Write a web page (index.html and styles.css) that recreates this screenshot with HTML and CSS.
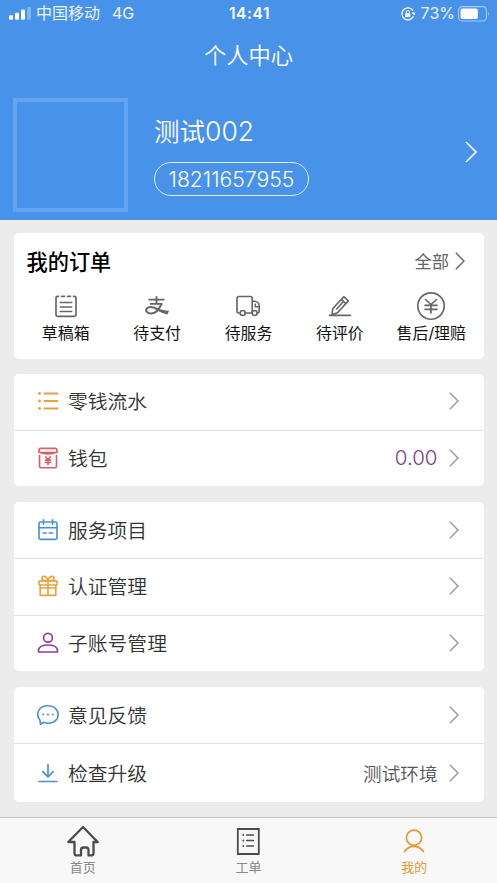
FILE: index.html
```html
<!DOCTYPE html>
<html lang="zh-CN">
<head>
<meta charset="utf-8">
<title>个人中心</title>
<link rel="stylesheet" href="styles.css">
</head>
<body>
<svg class="defs" width="0" height="0" aria-hidden="true">
  <symbol id="chevron" viewBox="0 0 10 18"><path d="M.8 .8 9 9 .8 17.2"/></symbol>
</svg>
<div class="app">
  <header class="header">
    <div class="status">
      <div class="status-left">
        <svg class="signal" width="22" height="13" viewBox="0 0 22 13"><rect x="0" y="8.2" width="4" height="4.600" rx="1"/><rect x="6" y="5.700" width="4" height="7.100" rx="1"/><rect x="12" y="2.500" width="4" height="10.300" rx="1"/><rect x="18" y="0" width="4" height="12.800" rx="1" opacity=".3"/></svg>
        <span class="carrier">中国移动</span>
        <span>4G</span>
      </div>
      <div class="clock">14:41</div>
      <div class="status-right">
        <svg width="14" height="14" viewBox="0 0 14 14"><path d="M12 3.600A6 6 0 1 0 12.400 9.400" fill="none" stroke="#fff" stroke-width="1.300"/><path d="M10.800 5.500h3.200v2.600h-1.500z" fill="#fff"/><rect x="4.300" y="6.200" width="5" height="3.800" rx=".6" fill="#fff"/><path d="M5.300 6.400V5a1.500 1.500 0 0 1 3 0v1.400" fill="none" stroke="#fff"/></svg>
        <span class="percent">73%</span>
        <svg width="32" height="16" viewBox="0 0 32 16"><rect x=".6" y=".6" width="27.800" height="14.400" rx="3.600" fill="none" stroke="#a6caf5" stroke-width="1.100"/><rect x="2.600" y="2.600" width="17.200" height="10.400" rx="1.800" fill="#fff"/><path d="M30 5.400q1.700 2.400 0 4.800z" fill="#a6caf5"/></svg>
      </div>
    </div>
    <h1 class="page-title">个人中心</h1>
    <div class="profile">
      <div class="avatar"></div>
      <div class="identity">
        <div class="name">测试<span class="digits">002</span></div>
        <div class="phone">18211657955</div>
      </div>
      <svg class="profile-arrow" width="12" height="22" viewBox="0 0 12 22"><path d="M1 1 11 11 1 21"/></svg>
    </div>
  </header>

  <main class="content">
    <section class="card orders">
      <div class="orders-head">
        <h2>我的订单</h2>
        <div class="all"><span>全部</span><svg class="chevron"><use href="#chevron"/></svg></div>
      </div>
      <div class="order-grid">
        <div class="order">
          <svg class="icon" width="30" height="30" viewBox="0 0 30 30"><path d="M7.500 5.300H6.700Q5 5.300 5 7v16.600Q5 25.300 6.700 25.300h16.600q1.700 0 1.700-1.700V7Q25 5.300 23.300 5.300h-.8M10.500 5.300h3M16.500 5.300h3M9.300 11.500h11.400M9.300 16h11.400M9.300 20.500h11.400"/></svg>
          <span>草稿箱</span>
        </div>
        <div class="order">
          <svg class="icon" width="30" height="30" viewBox="0 0 30 30"><path stroke-width="1.900" stroke-linecap="butt" d="M6.500 8.600h16M14.500 5.300V13M8 12.900h12.500"/><path stroke-width="2" stroke-linecap="butt" d="M19.500 12.900c-1.800 4.500-5 9.300-10 9.500-4.500.2-6.500-2.700-4.600-4.900 2.400-2.600 7.200-1 10.600.7"/><path d="M14 16.800c4 1.800 8.500 2.700 13 3L25.500 23.400C20 22.500 17 20.500 13.500 18.500z" fill="#666" stroke="none"/></svg>
          <span>待支付</span>
        </div>
        <div class="order">
          <svg class="icon" width="30" height="30" viewBox="0 0 30 30"><path d="M6.500 22H5.700Q4 22 4 20.300V7.200Q4 5.500 5.700 5.500h11.800Q19.200 5.500 19.200 7.200V22M12.200 22h6.500M19.200 10.200h2.100c2.900 0 4.900 2.200 4.900 4.800v5q0 2-2 2M22.300 13.200v2.500h3.700"/><circle cx="9.700" cy="22" r="2.500"/><circle cx="21.600" cy="22" r="2.500"/></svg>
          <span>待服务</span>
        </div>
        <div class="order">
          <svg class="icon" width="30" height="30" viewBox="0 0 30 30"><path d="M4.500 24.300h21M7 23.500l.8-6L18.700 5.700l4.700 4.200L12.500 21.700zM16.200 8.400l4.700 4.200M18 11l-6.300 7"/></svg>
          <span>待评价</span>
        </div>
        <div class="order">
          <svg class="icon" width="30" height="30" viewBox="0 0 30 30"><circle cx="15" cy="15" r="13.200"/><path d="M9.500 8.500 15 13.500l5.500-5M9 14.300h12M9 18.300h12M15 13.500v8.500"/></svg>
          <span>售后/理赔</span>
        </div>
      </div>
    </section>

    <section class="card">
      <div class="row">
        <svg class="icon orange" width="24" height="24" viewBox="0 0 24 24"><path stroke-width="1.800" d="M8.500 4.500h13M8.500 12h13M8.500 19.500h13"/><path stroke-width="2.900" d="M3.500 4.500h.01M3.500 12h.01M3.500 19.500h.01"/></svg>
        <span class="label">零钱流水</span><svg class="chevron"><use href="#chevron"/></svg>
      </div>
      <div class="row">
        <svg class="icon red" width="24" height="24" viewBox="0 0 24 24"><path d="M4.500 2.300h15Q21 2.300 21 4v2.500H3V4Q3 2.300 4.500 2.300zM3 6c5 2.700 13 2.700 18 0M3.500 9.500v10.200Q3.500 21.700 5.500 21.700h13q2 0 2-2V9.500"/><path stroke-width="1.700" d="m9.700 11 2.300 2.700 2.300-2.700M9.500 14.200h5M9.500 16.500h5M12 13.700v4.800"/></svg>
        <span class="label">钱包</span><span class="amount">0.00</span><svg class="chevron"><use href="#chevron"/></svg>
      </div>
    </section>

    <section class="card services">
      <div class="row">
        <svg class="icon blue" width="24" height="24" viewBox="0 0 24 24"><rect x="3" y="4" width="18" height="17.300" rx="1.700"/><path d="M3 9.700h18M7.500 1.800v4.500M16.500 1.800v4.500M7.200 15h3M13.200 15h3.500"/></svg>
        <span class="label">服务项目</span><svg class="chevron"><use href="#chevron"/></svg>
      </div>
      <div class="row">
        <svg class="icon orange" width="24" height="24" viewBox="0 0 24 24"><rect x="3" y="6.800" width="18" height="4.200" rx=".8"/><path d="M4.200 11v10.300h15.600V11M12 7v14M4.200 14h15.600M12 6.500C10.500 1.500 5.500 1 6 4.500c.2 1.500 2 2.200 3.500 2.200M12 6.500C13.500 1.500 18.500 1 18 4.500c-.2 1.500-2 2.200-3.500 2.200"/></svg>
        <span class="label">认证管理</span><svg class="chevron"><use href="#chevron"/></svg>
      </div>
      <div class="row">
        <svg class="icon purple" width="24" height="24" viewBox="0 0 24 24"><circle cx="12" cy="6.700" r="4.400"/><path d="M2.500 21V19c.5-3 4-5 9.500-5s9 2 9.500 5v2z"/></svg>
        <span class="label">子账号管理</span><svg class="chevron"><use href="#chevron"/></svg>
      </div>
    </section>

    <section class="card support">
      <div class="row">
        <svg class="icon blue" width="24" height="24" viewBox="0 0 24 24"><path d="M4 17.200C-.2 12 1.500 2.700 12 2.700c6.300 0 10.200 4 10.200 8.700 0 6.800-8 10.800-14.400 7.900L4.500 21.300z"/><path stroke-width="2.100" d="M7.200 11.500h.01M12 11.500h.01M16.800 11.500h.01"/></svg>
        <span class="label">意见反馈</span><svg class="chevron"><use href="#chevron"/></svg>
      </div>
      <div class="row">
        <svg class="icon blue" width="24" height="24" viewBox="0 0 24 24"><path stroke-width="1.700" d="M3 20.500h18M12 3.500v12M6.800 10.700 12 15.800l5.200-5.100"/></svg>
        <span class="label">检查升级</span><span class="note">测试环境</span><svg class="chevron"><use href="#chevron"/></svg>
      </div>
    </section>
  </main>

  <nav class="tabbar">
    <div class="tab">
      <svg class="tab-icon" width="34" height="34" viewBox="0 0 34 34"><path stroke-width="2.300" d="M2.300 18 17 3l14.700 15h-4.200v11.200q0 2.200-2.200 2.200h-2.800V26q0-2.500-2.500-2.500h-2.500q-2.500 0-2.500 2.500v5.400H10.700q-2.200 0-2.200-2.200V18z"/></svg>
      <span>首页</span>
    </div>
    <div class="tab">
      <svg class="tab-icon" width="34" height="34" viewBox="0 0 34 34"><path stroke-linejoin="miter" stroke-width="1.800" d="M6.800 5h21v25h-21z"/><path stroke-width="1.700" d="M15.800 11h6.500M15.800 16.500h6.500M15.800 22h6.500"/><path stroke-width="1.900" d="M12.300 11h.01M12.300 16.500h.01M12.300 22h.01"/></svg>
      <span>工单</span>
    </div>
    <div class="tab active">
      <svg class="tab-icon" width="34" height="34" viewBox="0 0 34 34"><circle cx="17" cy="13.800" r="7.600" stroke-width="1.700"/><path stroke-width="1.700" d="M7.500 27.500c5-6.800 14-6.800 19 0"/></svg>
      <span>我的</span>
    </div>
  </nav>
</div>
</body>
</html>
```
FILE: styles.css
```css
* { box-sizing: border-box; }
body {
  margin: 0;
  background: #ececec;
  color: #333;
  font-family: Inter, "Noto Sans CJK SC", sans-serif;
}
h1, h2 { margin: 0; }
svg { display: block; flex: none; }
.defs { position: absolute; }
.app { width: 497px; height: 883px; display: flex; flex-direction: column; overflow: hidden; }

.header { height: 219.500px; flex: none; background: #4992ea; color: #fff; }
.status {
  height: 27px;
  padding: 0 7px 0 9px;
  display: grid;
  grid-template-columns: 1fr auto 1fr;
  align-items: center;
  font-size: 16px;
  line-height: 27px;
}
.status-left, .status-right { display: flex; align-items: center; color: #e9f4ff; }
.status-right { justify-content: flex-end; }
.signal { fill: #fff; }
.carrier { margin: 0 12px 0 5px; }
.clock { font-weight: 600; font-size: 15.500px; letter-spacing: .6px; }
.percent { margin: 0 3px 0 6px; font-size: 16px; }
.page-title {
  height: 57px;
  line-height: 57px;
  text-align: center;
  font-size: 22.300px;
  font-weight: 350;
}
.profile { display: flex; align-items: center; padding: 14px 20px 0 13px; }
.avatar { width: 115px; height: 114px; border: 4px solid #63a4f1; }
.identity { margin-left: 26px; display: flex; flex-direction: column; align-items: flex-start; flex: 1; }
.name { font-size: 25.500px; height: 35px; line-height: 35px; font-weight: 350; margin-bottom: 13px; }
.digits { font-size: 26.500px; line-height: 1; }
.phone {
  width: 155px;
  height: 34px;
  border: 1.500px solid #e2f0ff;
  border-radius: 17px;
  line-height: 32px;
  text-align: center;
  font-size: 21.200px;
  font-weight: 300;
}
.profile-arrow { fill: none; stroke: #fff; stroke-width: 1.600; margin-top: -6px; }

.content { flex: 1; padding: 13.500px 13px 0 13.500px; }
.card { background: #fff; border-radius: 5px; margin-bottom: 16px; }
.orders { height: 126px; margin-bottom: 14.500px; }
.support { margin-bottom: 0; }
.orders-head { display: flex; justify-content: space-between; align-items: center; height: 56px; padding: 0 19px 0 13px; }
.orders-head h2 { font-size: 21.200px; font-weight: 500; color: #000; margin-top: -2px; }
.all { display: flex; align-items: center; gap: 6px; font-size: 17.300px; color: #666; }
.all span { margin-top: -2px; }
.all .chevron { stroke: #666; }
.order-grid { display: grid; grid-template-columns: repeat(5, 91.400px); padding-left: 6.500px; }
.order { display: flex; flex-direction: column; align-items: center; font-size: 15.900px; line-height: 24px; color: #111; white-space: nowrap; }
.icon, .tab-icon { fill: none; stroke: #666; stroke-width: 1.650; stroke-linecap: round; stroke-linejoin: round; }
.order .icon { margin: 2px 0 1px; }
.chevron { width: 10px; height: 18px; fill: none; stroke: #999; stroke-width: 1.400; }

.row { height: 56px; display: flex; align-items: center; padding: 0 25.500px 1px 22.500px; }
.row + .row { height: 56.500px; border-top: 1px solid #e2e2e2; }
.support .row + .row { height: 59px; }
.label { flex: 1; margin: -1px 0 0 8px; font-size: 19.800px; font-weight: 350; }
.amount { font-size: 20.500px; font-weight: 300; color: #853a82; margin-right: 11px; }
.note { font-size: 18.600px; font-weight: 350; color: #555; margin: -1px 11px 0 0; }
.icon.orange { stroke: #e9a23b; }
.icon.red { stroke: #d85f68; }
.icon.blue { stroke: #4a90dc; }
.icon.purple { stroke: #8e3ca4; }

.tabbar {
  height: 66px;
  flex: none;
  display: grid;
  grid-template-columns: repeat(3, 1fr);
  background: #f8f8f8;
  border-top: 1px solid #c4c4c4;
}
.tab { display: flex; flex-direction: column; align-items: center; padding-top: 6px; font-size: 13px; line-height: 18px; color: #888; }
.tab-icon { stroke: #4c4c4c; }
.active { color: #e29a36; }
.active .tab-icon { stroke: #e29a36; }
```
